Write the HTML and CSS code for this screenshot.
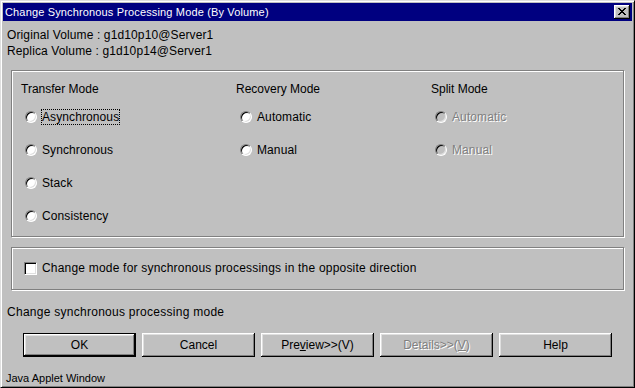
FILE: index.html
```html
<!DOCTYPE html>
<html lang="en">
<head>
  <meta charset="UTF-8">
  <title>Change Synchronous Processing Mode (By Volume)</title>
  <link rel="stylesheet" href="styles.css">
</head>
<body>

  <div class="window">
    <div class="titlebar">
      <span class="title">Change Synchronous Processing Mode (By Volume)</span>
      <button class="close">
        <svg width="8" height="7" viewBox="0 0 8 7" shape-rendering="crispEdges">
          <path d="M0 0h2v1h-2z M6 0h2v1h-2z M1 1h2v1h-2z M5 1h2v1h-2z M2 2h4v1h-4z M3 3h2v1h-2z M2 4h4v1h-4z M1 5h2v1h-2z M5 5h2v1h-2z M0 6h2v1h-2z M6 6h2v1h-2z" fill="#000"/>
        </svg>
      </button>
    </div>

    <div class="content">
      <div class="info">
        <p>Original Volume : g1d10p10@Server1</p>
        <p>Replica Volume : g1d10p14@Server1</p>
      </div>

      <div class="group modes">
        <div class="col">
          <div class="heading">Transfer Mode</div>
          <label class="radio"><span class="dot"></span><span class="text focus">Asynchronous</span></label>
          <label class="radio"><span class="dot"></span><span class="text">Synchronous</span></label>
          <label class="radio"><span class="dot"></span><span class="text">Stack</span></label>
          <label class="radio"><span class="dot"></span><span class="text">Consistency</span></label>
        </div>
        <div class="col">
          <div class="heading">Recovery Mode</div>
          <label class="radio"><span class="dot"></span><span class="text">Automatic</span></label>
          <label class="radio"><span class="dot"></span><span class="text">Manual</span></label>
        </div>
        <div class="col">
          <div class="heading">Split Mode</div>
          <label class="radio disabled"><span class="dot"></span><span class="text">Automatic</span></label>
          <label class="radio disabled"><span class="dot"></span><span class="text">Manual</span></label>
        </div>
      </div>

      <div class="group option">
        <label class="check"><span class="box"></span><span>Change mode for synchronous processings in the opposite direction</span></label>
      </div>

      <p class="status">Change synchronous processing mode</p>

      <div class="buttons">
        <button class="btn default">OK</button>
        <button class="btn">Cancel</button>
        <button class="btn">Pre<u>v</u>iew&gt;&gt;(V)</button>
        <button class="btn disabled">Details&gt;&gt;(<u>V</u>)</button>
        <button class="btn">Help</button>
      </div>

      <p class="footer">Java Applet Window</p>
    </div>
  </div>

</body>
</html>
```

FILE: styles.css
```css
html, body {
  margin: 0;
  padding: 0;
  background: #c0c0c0;
}
body {
  font-family: 'Liberation Sans', Arial, sans-serif;
  font-size: 12px;
  color: #000;
}
p {
  margin: 0;
}
.window {
  width: 635px;
  height: 388px;
  box-sizing: border-box;
  padding: 2px;
  border: 1px solid;
  border-color: #dfdfdf #000 #000 #dfdfdf;
  box-shadow: inset 1px 1px #fff, inset -1px -1px #808080;
  background: #c0c0c0;
  display: flex;
  flex-direction: column;
  overflow: hidden;
}
.titlebar {
  height: 18px;
  background: #000080;
  display: flex;
  align-items: center;
  justify-content: space-between;
  padding: 0 2px;
}
.title {
  color: #fff;
  font-size: 11px;
  letter-spacing: 0.15px;
  line-height: 18px;
}
.close {
  width: 16px;
  height: 14px;
  padding: 0;
  border: none;
  background: #c0c0c0;
  box-shadow: inset -1px -1px #000, inset 1px 1px #fff, inset -2px -2px #808080, inset 2px 2px #dfdfdf;
  display: flex;
  align-items: center;
  justify-content: center;
}
.close svg {
  display: block;
  margin-left: -1px;
  margin-top: -1px;
}
.content {
  flex: 1;
  display: flex;
  flex-direction: column;
}
.info {
  padding: 6px 4px 0;
  line-height: 16px;
  letter-spacing: 0.12px;
}
.group {
  margin: 0 8px;
  border: 1px solid #808080;
  box-shadow: inset 1px 1px #fff, 1px 1px #fff;
}
.modes {
  margin-top: 11px;
  padding: 10px 9px 4px;
  display: grid;
  grid-template-columns: 215px 195px 1fr;
}
.heading {
  line-height: 16px;
  margin-bottom: 3px;
}
.radio {
  height: 33px;
  display: flex;
  align-items: center;
  padding-left: 4px;
}
.dot {
  width: 12px;
  height: 12px;
  box-sizing: border-box;
  border-radius: 50%;
  border: 1px solid;
  border-color: #808080 #fff #fff #808080;
  box-shadow: inset 1px 1px #000, inset -1px -1px #dfdfdf;
  background: #fff;
  margin-right: 4px;
}
.radio .text {
  line-height: 14px;
  letter-spacing: 0.1px;
  border: 1px dotted transparent;
}
.radio .focus {
  border-color: #000;
}
.radio.disabled .dot {
  background: #c0c0c0;
}
.radio.disabled .text,
.btn.disabled {
  color: #808080;
  text-shadow: 1px 1px #fff;
}
.option {
  margin-top: 10px;
  padding: 12px 12px 13px;
}
.check {
  display: flex;
  align-items: center;
  line-height: 16px;
  letter-spacing: 0.2px;
}
.box {
  width: 13px;
  height: 13px;
  box-sizing: border-box;
  border: 1px solid;
  border-color: #808080 #fff #fff #808080;
  box-shadow: inset 1px 1px #000, inset -1px -1px #dfdfdf;
  background: #fff;
  margin-right: 5px;
}
.status {
  margin-top: 14px;
  padding-left: 4px;
  line-height: 16px;
  letter-spacing: 0.27px;
}
.buttons {
  margin-top: 13px;
  padding-left: 20px;
  display: flex;
  gap: 6px;
}
.btn {
  width: 113px;
  height: 24px;
  box-sizing: border-box;
  padding: 0;
  border: none;
  font: inherit;
  color: #000;
  background: #c0c0c0;
  box-shadow: inset -1px -1px #000, inset 1px 1px #fff, inset -2px -2px #808080, inset 2px 2px #dfdfdf;
}
.btn.default {
  border: 1px solid #000;
}
.footer {
  margin-top: 13px;
  padding-left: 3px;
  font-size: 11px;
  line-height: 16px;
}
```
